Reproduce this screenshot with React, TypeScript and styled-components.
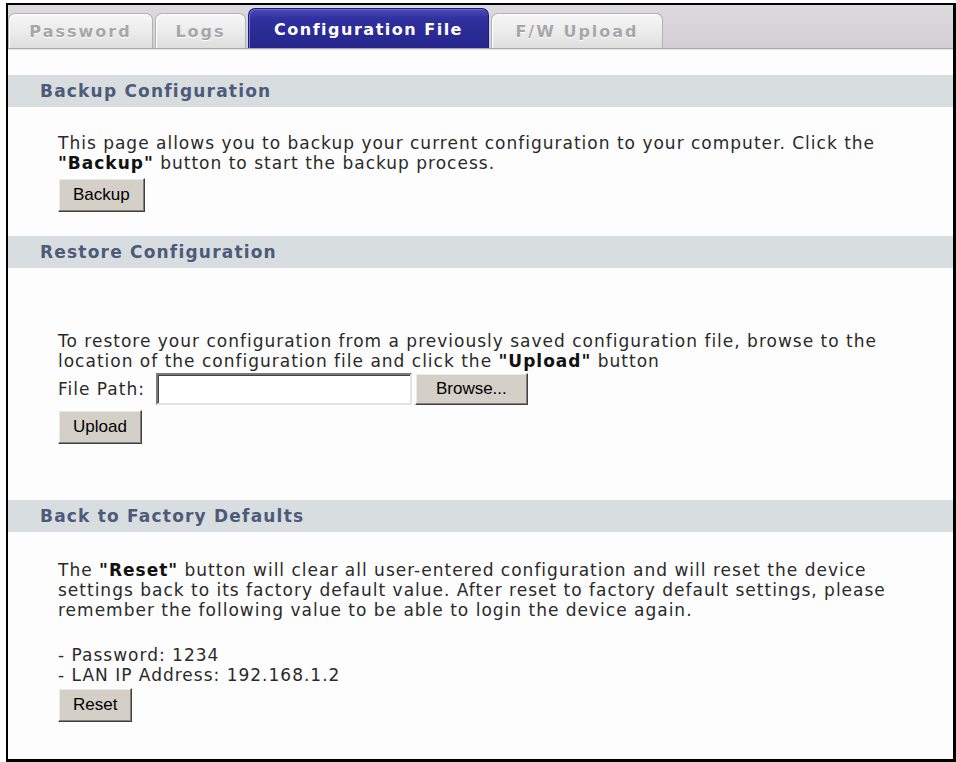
import React from 'react';
import styled, { createGlobalStyle } from 'styled-components';

const GlobalStyle = createGlobalStyle`
  html, body {
    margin: 0;
    padding: 0;
    background: #ffffff;
  }
`;

const tabs = [
  { label: 'Password', width: 145 },
  { label: 'Logs', width: 91 },
  { label: 'Configuration File', width: 241, active: true },
  { label: 'F/W Upload', width: 172 },
];

export default function App() {
  return (
    <>
      <GlobalStyle />
      <Frame>
        <TabBar>
          {tabs.map((t) => (
            <Tab key={t.label} $width={t.width} $active={!!t.active}>
              {t.label}
            </Tab>
          ))}
        </TabBar>

        <Content>
          <SectionHeader>Backup Configuration</SectionHeader>
          <SectionBody $top={26}>
            <Text>
              This page allows you to backup your current configuration to your computer. Click the
              <br />
              <b>"Backup"</b> button to start the backup process.
            </Text>
            <Button $gap={5}>Backup</Button>
          </SectionBody>

          <SectionHeader $gap={24}>Restore Configuration</SectionHeader>
          <SectionBody $top={63}>
            <Text>
              To restore your configuration from a previously saved configuration file, browse to the
              <br />
              location of the configuration file and click the <b>"Upload"</b> button
            </Text>
            <FileRow>
              <Label>File Path:</Label>
              <PathInput type="text" />
              <Button $pad={20} $height={32}>Browse...</Button>
            </FileRow>
            <Button $gap={5}>Upload</Button>
          </SectionBody>

          <SectionHeader $gap={56}>Back to Factory Defaults</SectionHeader>
          <SectionBody $top={28}>
            <Text>
              The <b>"Reset"</b> button will clear all user-entered configuration and will reset the device
              <br />
              settings back to its factory default value. After reset to factory default settings, please
              <br />
              remember the following value to be able to login the device again.
            </Text>
            <Text $gap={25}>
              - Password: 1234
              <br />
              - LAN IP Address: 192.168.1.2
            </Text>
            <Button $gap={3}>Reset</Button>
          </SectionBody>
        </Content>
      </Frame>
    </>
  );
}

const Frame = styled.div`
  box-sizing: border-box;
  margin: 3px 0 0 6px;
  width: 950px;
  height: 759px;
  border: 2px solid #000;
  border-right-width: 3px;
  border-bottom-width: 3px;
  background: #fdfdfd;
  display: flex;
  flex-direction: column;
  overflow: hidden;
`;

const TabBar = styled.div`
  height: 43px;
  display: flex;
  align-items: flex-end;
  gap: 2px;
  background: linear-gradient(#dcdadc, #d2d0d2);
  border-bottom: 1px solid #a9a9a9;
  box-shadow: 0 1px 0 #e6e6e6;
`;

const Tab = styled.div<{ $width: number; $active: boolean }>`
  box-sizing: border-box;
  width: ${(p) => p.$width}px;
  height: ${(p) => (p.$active ? 40 : 35)}px;
  display: flex;
  align-items: center;
  justify-content: center;
  border-radius: 7px 7px 0 0;
  font-family: 'DejaVu Sans', Verdana, sans-serif;
  font-weight: bold;
  font-size: 16px;
  letter-spacing: ${(p) => (p.$active ? 1.5 : 2)}px;
  color: ${(p) => (p.$active ? '#ffffff' : '#a7a7a9')};
  text-shadow: ${(p) => (p.$active ? 'none' : '0 1px 0 #ffffff')};
  padding-top: ${(p) => (p.$active ? 2 : 0)}px;
  background: ${(p) =>
    p.$active
      ? 'linear-gradient(#4b4bb8 0%, #30309e 25%, #26268d 100%)'
      : 'linear-gradient(#f6f6f6 0%, #ebebeb 55%, #dedede 100%)'};
  border: 1px solid ${(p) => (p.$active ? '#1c1c72' : '#b3b3b3')};
  border-bottom: none;
  box-shadow: ${(p) => (p.$active ? 'inset 1px 1px 0 #6a6ad0' : 'inset 1px 1px 0 #ffffff')};
`;

const Content = styled.div`
  padding-top: 26px;
  display: flex;
  flex-direction: column;
`;

const SectionHeader = styled.div<{ $gap?: number }>`
  margin-top: ${(p) => p.$gap ?? 0}px;
  height: 32px;
  display: flex;
  align-items: center;
  padding-left: 32px;
  background: #d8dde0;
  font-family: 'DejaVu Sans', Verdana, sans-serif;
  font-weight: bold;
  font-size: 17px;
  letter-spacing: 1.2px;
  color: #4e5a7a;
`;

const SectionBody = styled.div<{ $top: number }>`
  padding: ${(p) => p.$top}px 0 0 50px;
  display: flex;
  flex-direction: column;
  align-items: flex-start;
`;

const Text = styled.div<{ $gap?: number }>`
  margin-top: ${(p) => p.$gap ?? 0}px;
  font-family: 'DejaVu Sans', Verdana, sans-serif;
  font-size: 17px;
  letter-spacing: 1px;
  line-height: 20px;
  color: #2a2a2a;
  white-space: nowrap;

  b {
    color: #111111;
  }
`;

const Button = styled.button<{ $gap?: number; $pad?: number; $height?: number }>`
  margin-top: ${(p) => p.$gap ?? 0}px;
  height: ${(p) => p.$height ?? 34}px;
  padding: 0 ${(p) => p.$pad ?? 14}px;
  font-family: 'Liberation Sans', Arial, sans-serif;
  font-size: 17px;
  color: #000;
  background: #d4d0c8;
  border: 1px solid;
  border-color: #ffffff #404040 #404040 #ffffff;
  box-shadow: inset -1px -1px 0 #808080, inset 1px 1px 0 #ece9e2;
  cursor: default;
`;

const FileRow = styled.div`
  margin-top: 2px;
  display: flex;
  align-items: center;
  gap: 3px;
`;

const Label = styled.span`
  font-family: 'DejaVu Sans', Verdana, sans-serif;
  font-size: 17px;
  letter-spacing: 1px;
  color: #2a2a2a;
  margin-right: 8px;
`;

const PathInput = styled.input`
  box-sizing: border-box;
  width: 256px;
  height: 32px;
  background: #fff;
  border: 2px solid;
  border-color: #7a7a7a #e4e4e4 #e4e4e4 #7a7a7a;
  box-shadow: inset 1px 1px 0 #404040;
  outline: none;
`;
